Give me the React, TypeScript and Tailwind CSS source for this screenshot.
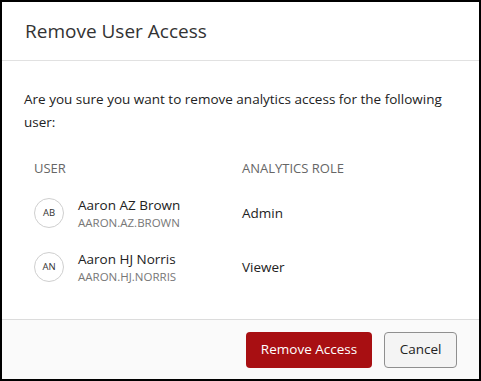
const users = [
	{ initials: "AB", name: "Aaron AZ Brown", login: "AARON.AZ.BROWN", role: "Admin" },
	{ initials: "AN", name: "Aaron HJ Norris", login: "AARON.HJ.NORRIS", role: "Viewer" },
];

export default function App() {
	return (
		<div
			className="w-[481px] h-[381px] bg-white border-2 border-black flex flex-col text-[#333]"
			style={{ fontFamily: '"Segoe UI", "Open Sans", "Noto Sans", sans-serif' }}
		>
			<div className="h-[59px] border-b border-[#e1e1e1] px-[23px] flex items-center">
				<h2 className="text-[19px] text-[#333] font-normal">Remove User Access</h2>
			</div>
			<div className="flex-1 px-[22px] pt-[27px]">
				<p className="text-[13.5px] leading-[23px] text-[#222]">
					Are you sure you want to remove analytics access for the following user:
				</p>
				<div className="mt-[25px] grid grid-cols-[218px_1fr] text-[13.5px]">
					<div className="pl-[10px] text-[#666] text-[13px] h-[20px]">USER</div>
					<div className="text-[#666] text-[13px]">ANALYTICS ROLE</div>
					{users.map((u) => (
						<div key={u.login} className="contents">
							<div className="flex items-center pl-[10px] h-[54px] pt-[14px]">
								<div className="w-[30px] h-[30px] rounded-full border border-[#cfcfcf] flex items-center justify-center text-[9.5px] text-[#333]">
									{u.initials}
								</div>
								<div className="ml-[14px] flex flex-col">
									<span className="text-[13.5px] leading-[20px] text-[#222]">{u.name}</span>
									<span className="text-[11.5px] leading-[16px] text-[#777]">{u.login}</span>
								</div>
							</div>
							<div className="flex items-center h-[54px] pt-[14px] text-[#222]">{u.role}</div>
						</div>
					))}
				</div>
			</div>
			<div className="h-[60px] border-t border-[#dcdcdc] bg-[#fafafa] flex items-center justify-end gap-[12px] pr-[22px]">
				<button className="h-[36px] w-[126px] rounded-[4px] bg-[#a80f12] text-white text-[13.5px]">
					Remove Access
				</button>
				<button className="h-[36px] w-[73px] rounded-[4px] bg-[#f4f4f4] border border-[#8f8f8f] text-[#222] text-[13.5px]">
					Cancel
				</button>
			</div>
		</div>
	);
}
